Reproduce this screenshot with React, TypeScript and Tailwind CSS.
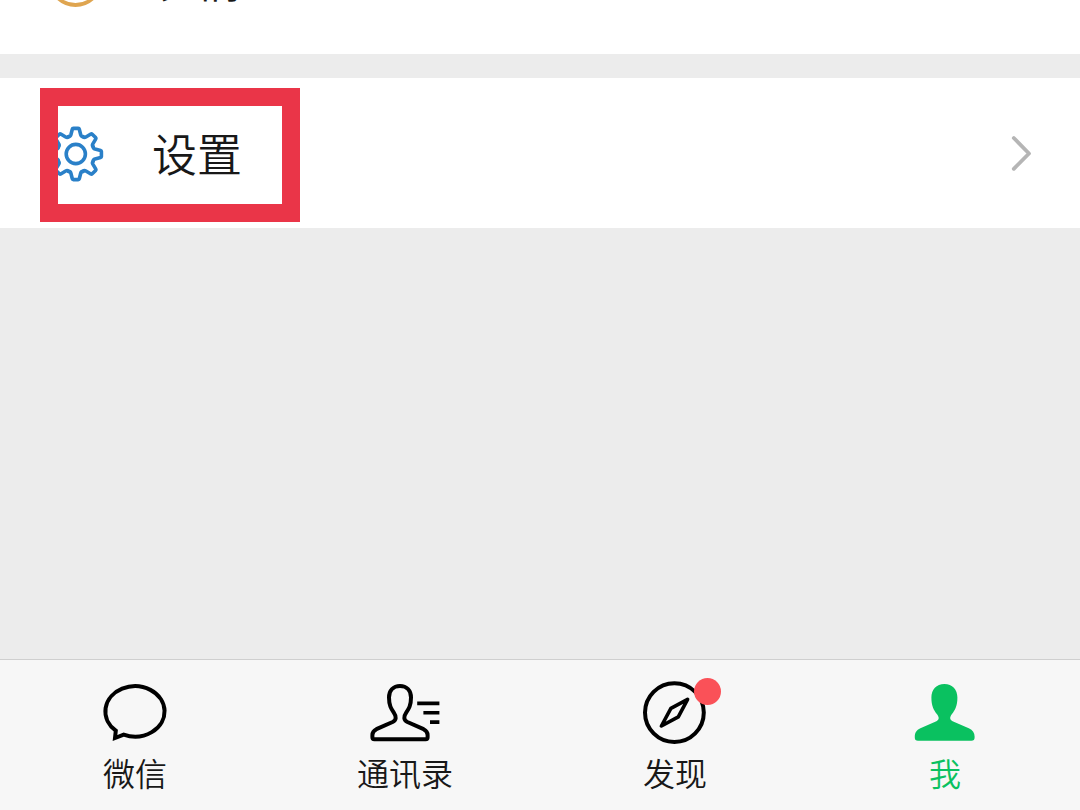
import type { ReactNode } from "react";
import clsx from "clsx";

type MenuRowProps = {
  label: string;
  icon: ReactNode;
  highlighted?: boolean;
};

type TabProps = {
  label: string;
  icon: ReactNode;
  active?: boolean;
  badge?: boolean;
};

const gearAngles = [0, 45, 90, 135, 180, 225, 270, 315];

const GearIcon = () => (
  <svg
    viewBox="0 0 60 60"
    className="size-15 shrink-0"
    fill="none"
    stroke="#2a80c8"
    strokeWidth="3.6"
    strokeLinecap="round"
    strokeLinejoin="round"
    aria-hidden="true"
  >
    <g transform="translate(29.8 31)">
      {gearAngles.map((angle) => (
        <path
          key={angle}
          transform={`rotate(${angle})`}
          d="M-7.2 -17.4Q-5.4 -17.4 -4.9 -19.2L-3.5 -24.8Q-3.3 -25.6 -2.4 -25.6H2.4Q3.3 -25.6 3.5 -24.8L4.9 -19.2Q5.4 -17.4 7.2 -17.4"
        />
      ))}
      <circle r="9.6" />
    </g>
  </svg>
);

const StickerIcon = () => (
  <svg
    viewBox="0 0 60 60"
    className="size-15 shrink-0"
    fill="none"
    stroke="#dfa550"
    strokeWidth="3.8"
    strokeLinecap="round"
    aria-hidden="true"
  >
    <circle cx="29.5" cy="30.5" r="25.5" />
    <path d="M17 33a13 13 0 0 0 26 0z" />
  </svg>
);

const ChatIcon = () => (
  <svg
    viewBox="0 0 72 68"
    className="h-17 w-18"
    fill="none"
    stroke="currentColor"
    strokeWidth="4"
    aria-hidden="true"
  >
    <path d="M16.8 52.6A29.6 25.2 0 1 1 24.7 56.7L16 60Z" />
  </svg>
);

const ContactsIcon = () => (
  <svg
    viewBox="0 0 72 68"
    className="h-17 w-18"
    fill="none"
    stroke="currentColor"
    strokeWidth="4"
    strokeLinejoin="round"
    aria-hidden="true"
  >
    <path d="M31 8C24.3 8 20 12.6 20 19.5C20 27.5 22.2 30.8 24.8 34.6C27.6 38.6 27.4 42.2 23.6 44L7.4 51.2C4.2 52.8 3.4 54 3.4 57V59.2Q3.4 61.3 5.4 61.3H56.6Q58.6 61.3 58.6 59.2V57C58.6 54 57.8 52.8 54.6 51.2L38.4 44C34.6 42.2 34.4 38.6 37.2 34.6C39.8 30.8 42 27.5 42 19.5C42 12.6 37.7 8 31 8Z" />
    <path strokeWidth="3.6" d="M48.2 25.4H70.4M54.4 34.7H70.4M61 44.1H70.4" />
  </svg>
);

const CompassIcon = () => (
  <svg
    viewBox="0 0 72 68"
    className="h-17 w-18"
    fill="none"
    stroke="currentColor"
    strokeWidth="4"
    strokeLinejoin="round"
    aria-hidden="true"
  >
    <circle cx="35.4" cy="34.6" r="29.4" />
    <path
      strokeWidth="3.6"
      d="M48.6 21.4L31.9 30.4L22.4 48L39.3 38.9Z"
    />
  </svg>
);

const MeIcon = () => (
  <svg
    viewBox="0 0 72 68"
    className="h-17 w-18"
    fill="currentColor"
    aria-hidden="true"
  >
    <path d="M35.4 6C27.4 6 22.4 11.6 22.4 19.6C22.4 28 24.6 32 27.8 36C30.2 39 30.6 41.6 27.4 43.2L11.4 50.2C7.4 52 5.8 55 5.8 58.4V59.6Q5.8 62.8 9 62.8H62.4Q65.6 62.8 65.6 59.6V58.4C65.6 55 63.8 52 59.8 50.2L43.6 43.2C40.4 41.6 40.6 39 43 36C46.2 32 48.4 28 48.4 19.6C48.4 11.6 43.4 6 35.4 6Z" />
  </svg>
);

const ChevronIcon = () => (
  <svg
    viewBox="0 0 24 40"
    className="ml-auto h-10 w-6"
    fill="none"
    stroke="#b5b5b5"
    strokeWidth="3.8"
    strokeLinecap="round"
    strokeLinejoin="round"
    aria-hidden="true"
  >
    <path d="M3.8 5L19 20.5L3.8 35.8" />
  </svg>
);

const MenuRow = ({ label, icon, highlighted }: MenuRowProps) => (
  <button
    type="button"
    className="relative flex h-[150px] w-full shrink-0 items-center bg-white px-[46px] text-left"
  >
    {icon}
    <span className="ml-[46px] text-[45px] leading-[58px] text-[#181818]">
      {label}
    </span>
    <ChevronIcon />
    {highlighted && (
      <span className="absolute top-[10px] left-10 h-[134px] w-[260px] border-[18px] border-[#ea3548]" />
    )}
  </button>
);

const Tab = ({ label, icon, active, badge }: TabProps) => (
  <button
    type="button"
    aria-current={active ? "page" : undefined}
    className={clsx(
      "flex flex-1 flex-col items-center gap-[10px] pt-[18px] pb-[22px]",
      active ? "text-[#0ac160]" : "text-black"
    )}
  >
    <span className="relative">
      {icon}
      {badge && (
        <span className="absolute top-0 left-[55px] size-[27px] rounded-full bg-[#fa5158]" />
      )}
    </span>
    <span
      className={clsx(
        "text-[32px] leading-8",
        active ? "text-[#0ac160]" : "text-[#181818]"
      )}
    >
      {label}
    </span>
  </button>
);

const App = () => {
  return (
    <div className="flex min-h-screen flex-col bg-[#ececec] font-['Noto_Sans_CJK_SC',sans-serif] font-[350]">
      <main className="flex-1">
        {/* the list is scrolled, only the end of this row shows */}
        <div className="flex h-[54px] flex-col justify-end overflow-hidden">
          <MenuRow label="表情" icon={<StickerIcon />} />
        </div>
        <div className="mt-6">
          <MenuRow label="设置" icon={<GearIcon />} highlighted />
        </div>
      </main>
      <nav className="flex border-t border-[#cfcfcf] bg-[#f7f7f7]">
        <Tab label="微信" icon={<ChatIcon />} />
        <Tab label="通讯录" icon={<ContactsIcon />} />
        <Tab label="发现" icon={<CompassIcon />} badge />
        <Tab label="我" icon={<MeIcon />} active />
      </nav>
    </div>
  );
};

export default App;
